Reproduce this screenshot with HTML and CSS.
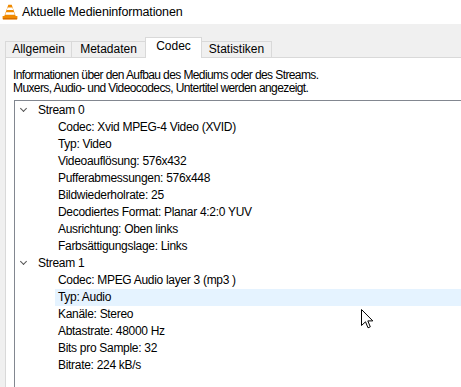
FILE: index.html
```html
<!DOCTYPE html>
<html>
	<head>
		<meta charset="UTF-8">
		<title>Aktuelle Medieninformationen</title>
		<link rel="stylesheet" href="styles.css">
	</head>
	<body>
		<div class="titlebar">
			<svg class="vlcIcon" width="16" height="16" viewBox="0 0 16 16">
				<path d="M6.3 0.8 L9.7 0.8 L14 13 L2 13 Z" fill="#f08a00"/>
				<path d="M5.6 3.6 L10.4 3.6 L11.2 6 L4.8 6 Z" fill="#fff"/>
				<path d="M4.1 8.2 L11.9 8.2 L12.8 10.7 L3.2 10.7 Z" fill="#fff"/>
				<path d="M0.6 12.6 Q0.6 12 1.3 12 L14.7 12 Q15.4 12 15.4 12.6 L15.4 14.8 Q15.4 15.4 14.7 15.4 L1.3 15.4 Q0.6 15.4 0.6 14.8 Z" fill="#f08a00"/>
				<path d="M1 14.4 L15 14.4 L15 15.2 L1 15.2 Z" fill="#c85a00"/>
			</svg>
			<span>Aktuelle Medieninformationen</span>
		</div>
		<div class="tabs">
			<div class="tab" style="width:67px">Allgemein</div>
			<div class="tab" style="width:75px">Metadaten</div>
			<div class="tab active" style="width:57px">Codec</div>
			<div class="tab" style="width:71px">Statistiken</div>
		</div>
		<div class="panel">
			<p class="desc">Informationen über den Aufbau des Mediums oder des Streams.<br>Muxers, Audio- und Videocodecs, Untertitel werden angezeigt.</p>
			<div class="tree">
				<div class="row stream"><span class="chevron"></span>Stream 0</div>
				<div class="row item">Codec: Xvid MPEG-4 Video (XVID)</div>
				<div class="row item">Typ: Video</div>
				<div class="row item">Videoauflösung: 576x432</div>
				<div class="row item">Pufferabmessungen: 576x448</div>
				<div class="row item">Bildwiederholrate: 25</div>
				<div class="row item">Decodiertes Format: Planar 4:2:0 YUV</div>
				<div class="row item">Ausrichtung: Oben links</div>
				<div class="row item">Farbsättigungslage: Links</div>
				<div class="row stream"><span class="chevron"></span>Stream 1</div>
				<div class="row item">Codec: MPEG Audio layer 3 (mp3 )</div>
				<div class="row item hover">Typ: Audio</div>
				<div class="row item">Kanäle: Stereo</div>
				<div class="row item">Abtastrate: 48000 Hz</div>
				<div class="row item">Bits pro Sample: 32</div>
				<div class="row item">Bitrate: 224 kB/s</div>
			</div>
		</div>
		<svg class="cursor" width="13" height="21" viewBox="0 0 13 21">
			<path d="M0.5 0.5 L0.5 16.5 L4.5 12.8 L7 18.8 L9.3 17.8 L6.8 11.9 L11.8 11.9 Z" fill="#fff" stroke="#000" stroke-width="1"/>
		</svg>
	</body>
</html>
```
FILE: styles.css
```css
*{
	margin: 0px;
	padding: 0px;
	box-sizing: border-box;
}
body{
	background: #f0f0f0;
	font-family: "Liberation Sans", Arial, sans-serif;
	font-size: 12px;
	color: #000;
	height: 387px;
	overflow: hidden;
}
.titlebar{
	height: 24px;
	background: #fff;
	display: flex;
	align-items: center;
	gap: 4px;
	padding-left: 2px;
	font-size: 12.5px;
	letter-spacing: -0.15px;
}
.tabs{
	margin-top: 13px;
	padding-left: 5px;
	height: 20px;
	display: flex;
	align-items: flex-end;
	position: relative;
	z-index: 1;
}
.tab{
	height: 16px;
	line-height: 15px;
	text-align: center;
	border: 1px solid #d9d9d9;
	border-bottom: none;
	background: #f0f0f0;
	margin-right: -1px;
}
.tab.active{
	height: 21px;
	margin-bottom: -1px;
	background: #fff;
	line-height: 17px;
	position: relative;
}
.panel{
	margin-left: 5px;
	height: 340px;
	background: #fff;
	border-top: 1px solid #d9d9d9;
	border-left: 1px solid #d9d9d9;
	padding: 11px 0 0 7px;
}
.desc{
	line-height: 13px;
	letter-spacing: -0.6px;
}
.tree{
	margin: 5px 0 0 1px;
	border-top: 1px solid #828790;
	border-left: 1px solid #828790;
	height: 300px;
	padding-top: 1px;
}
.row{
	height: 17px;
	line-height: 17px;
	white-space: nowrap;
	letter-spacing: -0.3px;
}
.stream{
	padding-left: 23px;
	position: relative;
}
.chevron{
	position: absolute;
	left: 6px;
	top: 4px;
	width: 5px;
	height: 5px;
	border-right: 1.3px solid #555;
	border-bottom: 1.3px solid #555;
	transform: rotate(45deg);
}
.item{
	margin-left: 40px;
	padding-left: 3px;
}
.hover{
	background: #e5f3ff;
}
.cursor{
	position: absolute;
	left: 361px;
	top: 309px;
}
```
